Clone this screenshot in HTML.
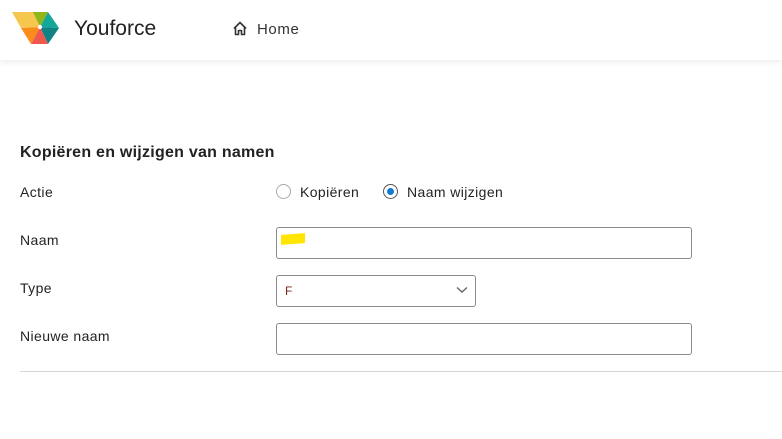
<!DOCTYPE html>
<html><head><style>
body{margin:0;width:782px;height:439px;background:#fff;font-family:"Liberation Sans",sans-serif;color:#222;position:relative;overflow:hidden}
.hdr{position:absolute;left:0;top:0;width:782px;height:60px;background:#fff;box-shadow:0 2px 6px rgba(0,0,0,0.08)}
.t{position:absolute;white-space:nowrap}
.inp{position:absolute;border:1px solid #8a8a8a;border-radius:3px;background:#fff;box-sizing:border-box}
.lbl{font-size:14px;color:#222;left:20px;letter-spacing:0.4px}
</style></head><body>
<div class="hdr">
<svg style="position:absolute;left:0;top:0" width="70" height="50" viewBox="0 0 70 50">
<polygon points="12,12 33,12 40,27 21,28" fill="#f5c74f"/>
<polygon points="33,12 48,12 40,27" fill="#8fb51a"/>
<polygon points="48,12 59,28 40,27" fill="#13a79a"/>
<polygon points="59,28 48,44 40,27" fill="#118385"/>
<polygon points="40,27 48,44 31,44" fill="#f0584e"/>
<polygon points="21,28 40,27 31,44" fill="#fb8c1a"/>
<circle cx="40" cy="27" r="2.2" fill="#fff"/>
</svg>
<div class="t" style="left:74px;top:17px;font-size:21px;color:#222">Youforce</div>
<svg style="position:absolute;left:232px;top:21px" width="16" height="15" viewBox="0 0 16 15"><path d="M2 7.5 L8 1.5 L14 7.5 M3.5 6 V13.5 H6.5 V9.5 H9.5 V13.5 H12.5 V6" fill="none" stroke="#333" stroke-width="1.6" stroke-linejoin="round"/></svg>
<div class="t" style="left:257px;top:21px;font-size:15px;color:#333;letter-spacing:0.6px">Home</div>
</div>
<div class="t" style="left:20px;top:144px;font-size:16px;font-weight:bold;color:#222;letter-spacing:0.25px">Kopiëren en wijzigen van namen</div>
<div class="t lbl" style="top:184px">Actie</div>
<div style="position:absolute;left:276px;top:184px;width:15px;height:15px;border:1px solid #aaa;border-radius:50%;box-sizing:border-box"></div>
<div class="t" style="left:300px;top:184px;font-size:14px;letter-spacing:0.4px">Kopiëren</div>
<div style="position:absolute;left:383px;top:184px;width:15px;height:15px;border:1px solid #555;border-radius:50%;box-sizing:border-box"></div>
<div style="position:absolute;left:387px;top:188px;width:7px;height:7px;background:#1479d1;border-radius:50%"></div>
<div class="t" style="left:407px;top:184px;font-size:14px;letter-spacing:0.4px">Naam wijzigen</div>
<div class="t lbl" style="top:232px">Naam</div>
<div class="inp" style="left:276px;top:227px;width:416px;height:32px"></div>
<div style="position:absolute;left:281px;top:234px;width:24px;height:10px;background:#ffe500;transform:skewY(-4deg)"></div>
<div class="t lbl" style="top:280px">Type</div>
<div class="inp" style="left:276px;top:275px;width:200px;height:32px"></div>
<div class="t" style="left:285px;top:284px;font-size:12px;color:#7a2a1a">F</div>
<svg style="position:absolute;left:456px;top:286px" width="12" height="8" viewBox="0 0 12 8"><path d="M1 1.5 L6 6 L11 1.5" fill="none" stroke="#666" stroke-width="1.4"/></svg>
<div class="t lbl" style="top:328px">Nieuwe naam</div>
<div class="inp" style="left:276px;top:323px;width:416px;height:32px"></div>
<div style="position:absolute;left:20px;top:371px;width:762px;height:1px;background:#d6d6d6"></div>
</body></html>
